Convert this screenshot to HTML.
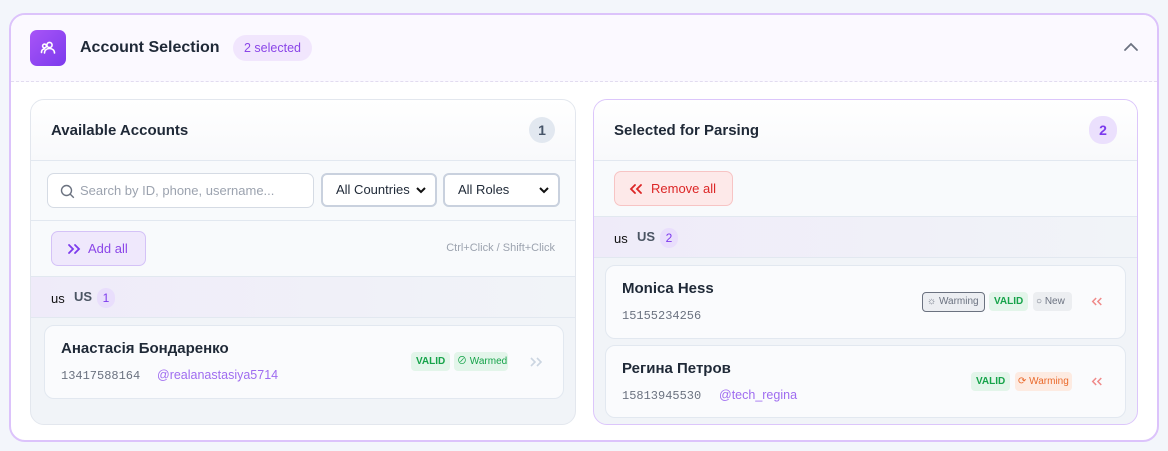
<!DOCTYPE html>
<html><head><meta charset="utf-8"><style>
*{box-sizing:border-box;margin:0;padding:0}
body{width:1168px;height:451px;background:#f3f6fb;font-family:"Liberation Sans","Noto Sans CJK SC",sans-serif;position:relative;overflow:hidden;color:#1f2937}
.abs{position:absolute}
.outer{left:9px;top:13px;width:1150px;height:429px;border:2px solid #dcc3fb;border-radius:16px;background:#fff}
.hdr{left:11px;top:15px;width:1146px;height:67px;background:#fbf9ff;border-radius:14px 14px 0 0;border-bottom:1px dashed #e2dcf0}
.panel{border:1px solid #e3e7ee;border-radius:14px;background:#f1f4f8;overflow:hidden}
.ph{position:absolute;left:0;top:0;right:0;height:61px;background:linear-gradient(#fff,#f8f9fb);border-bottom:1px solid #e2e8f0}
.ph b{position:absolute;left:20px;top:22px;font-size:15px;color:#1f2937}
.cnt{position:absolute;right:20px;top:17px;width:26px;height:26px;border-radius:13px;text-align:center;line-height:26px;font-size:14px;font-weight:bold}
.row{position:absolute;left:0;right:0;background:#f8fafc;border-bottom:1px solid #e2e8f0}
.grp{position:absolute;left:0;right:0;height:41px;background:linear-gradient(90deg,#efebf9,#f1f4f8);border-bottom:1px solid #e2e8f0}
.grp .a{position:absolute;left:20px;top:14px;font-size:13px;color:#111}
.grp .b{position:absolute;left:43px;top:12px;font-size:13px;font-weight:bold;color:#4b5563}
.grp .c{position:absolute;left:66px;top:11px;width:18px;height:20px;border-radius:9px;background:#e9defc;color:#7c3aed;font-size:12px;text-align:center;line-height:20px}
.card{position:absolute;background:#fafbfd;border:1px solid #e2e8f0;border-radius:10px}
.card .n{position:absolute;left:16px;top:14px;font-size:15px;font-weight:bold;color:#1f2937}
.card .p{position:absolute;left:16px;top:43px;font-family:"Liberation Mono",monospace;font-size:12px;color:#6b7280}
.card .u{position:absolute;top:42px;font-size:12.5px;color:#9f6cf0}
.tag{position:absolute;height:19px;border-radius:4px;font-size:10px;line-height:19px;padding:0 5px;white-space:nowrap}
.v{background:#e3f5ea;color:#16a34a;font-weight:bold}
.sel{position:absolute;height:34px;border:2px solid #c9d1de;border-radius:6px;background:#fff;font-size:13px;line-height:30px;padding-left:13px;color:#1f2937}
.sel svg{position:absolute;right:8px;top:11px}
</style></head><body>
<div class="abs outer"></div>
<div class="abs hdr"></div>
<div class="abs" style="left:30px;top:30px;width:36px;height:36px;border-radius:7px;background:linear-gradient(135deg,#a855f7,#7c3aed)">
<svg width="36" height="36" viewBox="0 0 36 36" fill="none" stroke="#fff" stroke-width="1.6" stroke-linecap="round"><circle cx="19.5" cy="15" r="2.6"/><path d="M14.5 23c0-2.8 2.2-4.5 5-4.5s5 1.7 5 4.5"/><circle cx="14.5" cy="16" r="1.9"/><path d="M11.5 22.5c0-2 1-3.3 2.8-3.5"/></svg></div>
<div class="abs" style="left:80px;top:39px;font-size:16px;font-weight:bold;color:#1f2937">Account Selection</div>
<div class="abs" style="left:233px;top:35px;width:79px;height:26px;border-radius:13px;background:#f1e6fd;color:#8b46e8;font-size:12.5px;text-align:center;line-height:26px">2 selected</div>
<svg class="abs" style="left:1123px;top:41px" width="16" height="12" viewBox="0 0 16 12"><path d="M2 9l6-6 6 6" fill="none" stroke="#6b7280" stroke-width="1.8" stroke-linecap="round"/></svg>

<!-- left -->
<div class="abs panel" style="left:30px;top:99px;width:546px;height:326px">
<div class="ph"><b>Available Accounts</b><div class="cnt" style="background:#e2e8f0;color:#475569">1</div></div>
<div class="row" style="top:61px;height:60px">
<div class="abs" style="left:16px;top:12px;width:267px;height:35px;border:1px solid #d5dbe4;border-radius:7px;background:#fff">
<svg class="abs" style="left:12px;top:10px" width="15" height="15" viewBox="0 0 15 15" fill="none" stroke="#6b7280" stroke-width="1.4"><circle cx="6.5" cy="6.5" r="5"/><path d="M10.3 10.3l3.5 3.5"/></svg>
<span class="abs" style="left:32px;top:9px;font-size:13px;color:#9ca3af">Search by ID, phone, username...</span></div>
<div class="sel" style="left:290px;top:12px;width:116px">All Countries<svg width="12" height="8" viewBox="0 0 12 8"><path d="M2 2l4 4 4-4" fill="none" stroke="#111" stroke-width="2"/></svg></div>
<div class="sel" style="left:412px;top:12px;width:117px">All Roles<svg width="12" height="8" viewBox="0 0 12 8"><path d="M2 2l4 4 4-4" fill="none" stroke="#111" stroke-width="2"/></svg></div>
</div>
<div class="row" style="top:121px;height:56px">
<div class="abs" style="left:20px;top:10px;width:95px;height:35px;border:1px solid #d4c2f7;border-radius:7px;background:#efe8fc;color:#8b46e8;font-size:13px;line-height:33px;padding-left:36px">Add all
<svg class="abs" style="left:15px;top:11px" width="14" height="12" viewBox="0 0 14 12" fill="none" stroke="#7c3aed" stroke-width="1.8" stroke-linecap="round"><path d="M2 2l4 4-4 4M8 2l4 4-4 4"/></svg></div>
<span class="abs" style="right:20px;top:21px;font-size:11px;color:#9ca3af">Ctrl+Click / Shift+Click</span>
</div>
<div class="grp" style="top:177px"><span class="a">us</span><span class="b">US</span><span class="c">1</span></div>
<div class="card" style="left:13px;top:225px;width:520px;height:74px">
<div class="n">Анастасія Бондаренко</div>
<div class="p">13417588164</div><div class="u" style="left:112px">@realanastasiya5714</div>
<div class="tag v" style="left:366px;top:26px">VALID</div>
<div class="tag" style="left:409px;top:26px;width:54px;background:#e3f5ea;color:#16a34a;padding:0 3px">⊘ Warmed</div>
<svg class="abs" style="left:484px;top:30px" width="14" height="12" viewBox="0 0 14 12" fill="none" stroke="#cbd5e1" stroke-width="1.6"><path d="M2 2l4 4-4 4M8 2l4 4-4 4"/></svg>
</div>
</div>

<!-- right -->
<div class="abs panel" style="left:593px;top:99px;width:545px;height:326px;border-color:#dcc6fb">
<div class="ph"><b>Selected for Parsing</b><div class="cnt" style="background:#ebe0fd;color:#7c3aed;width:28px;height:28px;top:16px;line-height:28px">2</div></div>
<div class="row" style="top:61px;height:56px">
<div class="abs" style="left:20px;top:10px;width:119px;height:35px;border:1px solid #f7c4c4;border-radius:7px;background:#fde9e9;color:#dc2626;font-size:13px;line-height:33px;padding-left:36px">Remove all
<svg class="abs" style="left:14px;top:11px" width="14" height="12" viewBox="0 0 14 12" fill="none" stroke="#dc2626" stroke-width="1.8" stroke-linecap="round"><path d="M6 2L2 6l4 4M12 2L8 6l4 4"/></svg></div>
</div>
<div class="grp" style="top:117px"><span class="a">us</span><span class="b">US</span><span class="c">2</span></div>
<div class="card" style="left:11px;top:165px;width:521px;height:74px">
<div class="n">Monica Hess</div><div class="p">15155234256</div>
<div class="tag" style="left:316px;top:26px;width:63px;border:1px solid #6b7280;background:#eceef2;color:#6b7280;height:20px;line-height:18px;padding:0 4px">☼ Warming</div>
<div class="tag v" style="left:383px;top:26px">VALID</div>
<div class="tag" style="left:427px;top:26px;width:39px;background:#eceef1;color:#6b7280;padding:0 3px">○ New</div>
<svg class="abs" style="left:485px;top:30px" width="12" height="11" viewBox="0 0 14 12" fill="none" stroke="#f08a8a" stroke-width="1.7"><path d="M6 2L2 6l4 4M12 2L8 6l4 4"/></svg>
</div>
<div class="card" style="left:11px;top:245px;width:521px;height:73px">
<div class="n">Регина Петров</div><div class="p">15813945530</div><div class="u" style="left:113px">@tech_regina</div>
<div class="tag v" style="left:365px;top:26px">VALID</div>
<div class="tag" style="left:409px;top:26px;width:57px;background:#fdebe2;color:#ea6a2c;padding:0 3px">⟳ Warming</div>
<svg class="abs" style="left:485px;top:30px" width="12" height="11" viewBox="0 0 14 12" fill="none" stroke="#f08a8a" stroke-width="1.7"><path d="M6 2L2 6l4 4M12 2L8 6l4 4"/></svg>
</div>
</div>
</body></html>
